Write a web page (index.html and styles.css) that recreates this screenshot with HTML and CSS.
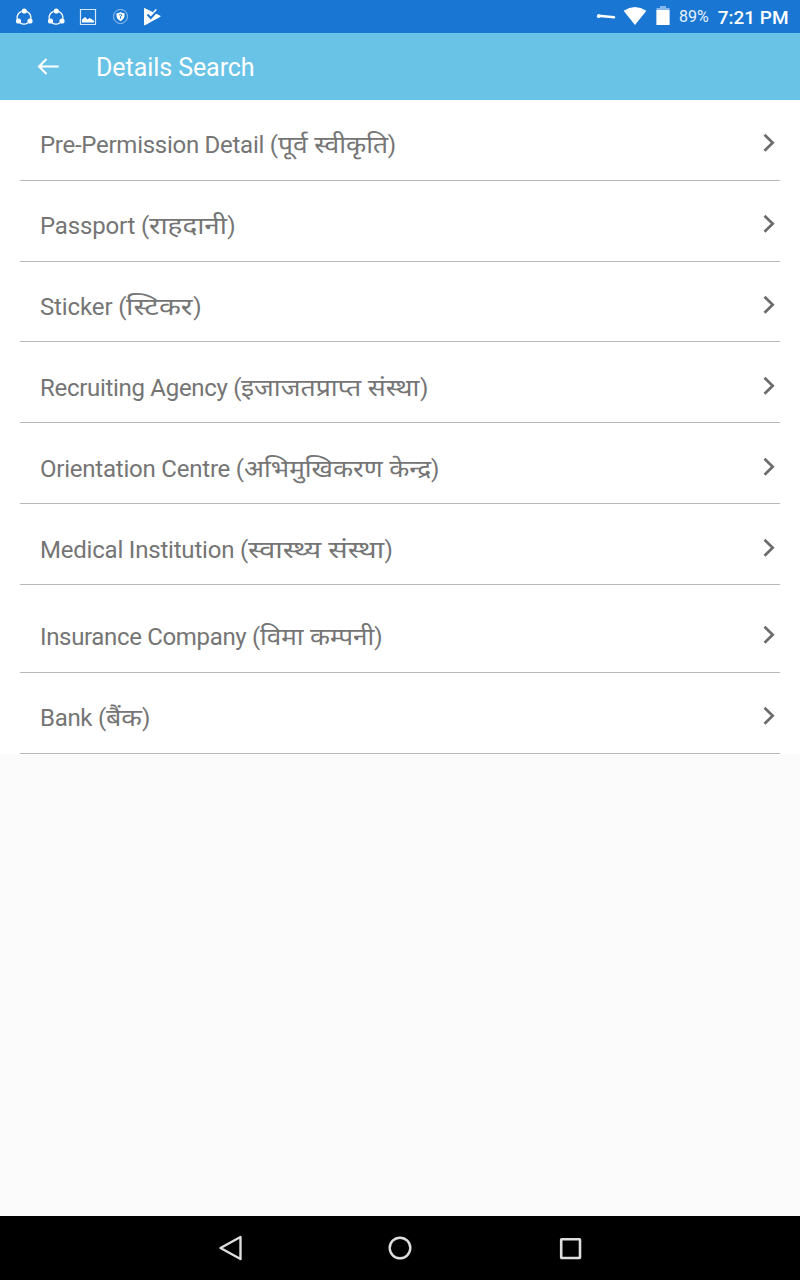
FILE: index.html
```
<!DOCTYPE html>
<html lang="en">
<head>
<meta charset="utf-8">
<title>Details Search</title>
<link rel="stylesheet" href="styles.css">
</head>
<body>
<svg class="symbols" aria-hidden="true">
  <symbol id="chevron" viewBox="0 0 14 20"><path d="M2.500 1.700l8.200 8-8.200 8" fill="none" stroke="#6c6c6c" stroke-width="2.700"/></symbol>
  <symbol id="share" viewBox="0 0 18 18"><path d="M6.600 3.300a6.700 6.700 0 0 0-4.300 7.800M11.400 3.300a6.700 6.700 0 0 1 4.300 7.800M5 14.700a6.700 6.700 0 0 0 8 0" fill="none" stroke="#fff" stroke-width="1.300"/><g fill="#fff"><circle cx="9.300" cy="3" r="2.600"/><circle cx="3.500" cy="13" r="2.600"/><circle cx="15" cy="13" r="2.600"/></g></symbol>
</svg>
<div class="screen">
  <div class="status">
    <div class="notifications">
      <svg width="18" height="18"><use href="#share"/></svg>
      <svg width="18" height="18"><use href="#share"/></svg>
      <svg width="18" height="18" viewBox="0 0 18 18"><path d="M1.500 1.500h15v15h-15z" fill="none" stroke="#d6e7f8" stroke-width="1.200"/><path d="M3 14.500v-3l3-2.500 2.500 2.500 2-1.500 2 1 2.500 2v1.500z" fill="#fff"/></svg>
      <svg width="18" height="18" viewBox="0 0 18 18"><circle cx="9.500" cy="8.500" r="7" fill="none" stroke="#9bc6f0" stroke-width="1"/><path d="M5.500 5.200q2.500 0 4-1.200 1.500 1.200 4 1.200v3.600q-.6 2.700-4 4.400-3.400-1.700-4-4.400z" fill="#fff"/><path d="M8.200 7q1.300-1.300 2.600 0 .2 1-1.300 1.600v2" fill="none" stroke="#1976d2" stroke-width="1"/></svg>
      <svg width="18" height="18" viewBox="0 0 18 18"><path d="M1.500.500 17.300 8.300 1.500 17z" fill="#fff" stroke="#fff" stroke-linejoin="round"/><path d="M4.500 6.500 7.800 10 16.500.500" fill="none" stroke="#1976d2" stroke-width="1.900"/><path d="M10.500 4.500 13.300 1.500" stroke="#fff" stroke-width="1.600"/></svg>
    </div>
    <div class="system">
      <svg class="key" width="20" height="8" viewBox="0 0 20 8"><path d="M2.500 2.800 18 4.200" fill="none" stroke="#fff" stroke-width="2.600" stroke-linecap="round"/><circle cx="2.800" cy="3.200" r="1.900" fill="#fff"/></svg>
      <svg class="wifi" width="24" height="18" viewBox="0 0 24 18"><path d="M.6 3.800Q12-3.600 23.400 3.800L12 18z" fill="#fff"/></svg>
      <svg class="battery" width="14" height="19" viewBox="0 0 14 19"><path d="M4 0h6v2h3.500v17H.5V2H4z" fill="#84b7ec"/><path d="M.5 4h13v15H.5z" fill="#fff"/></svg>
      <span class="percent">89%</span>
      <span class="time">7:21 PM</span>
    </div>
  </div>
  <header class="appbar">
    <svg width="24" height="20" viewBox="0 0 24 20"><path d="M10.500 2 3 9.500l7.500 7.500M3 9.500h19.700" fill="none" stroke="#fff" stroke-width="2.100"/></svg>
    <h1 class="title">Details Search</h1>
  </header>
  <main class="list">
    <div class="row permission"><span class="label">Pre-Permission Detail (<span class="np">पूर्व स्वीकृति</span>)</span><svg class="chevron"><use href="#chevron"/></svg></div>
    <div class="row passport"><span class="label">Passport (<span class="np">राहदानी</span>)</span><svg class="chevron"><use href="#chevron"/></svg></div>
    <div class="row short sticker"><span class="label">Sticker (<span class="np">स्टिकर</span>)</span><svg class="chevron"><use href="#chevron"/></svg></div>
    <div class="row recruiting"><span class="label">Recruiting Agency (<span class="np">इजाजतप्राप्त संस्था</span>)</span><svg class="chevron"><use href="#chevron"/></svg></div>
    <div class="row orientation"><span class="label">Orientation Centre (<span class="np">अभिमुखिकरण केन्द्र</span>)</span><svg class="chevron"><use href="#chevron"/></svg></div>
    <div class="row medical"><span class="label">Medical Institution (<span class="np">स्वास्थ्य संस्था</span>)</span><svg class="chevron"><use href="#chevron"/></svg></div>
    <div class="row tall insurance"><span class="label">Insurance Company (<span class="np">विमा कम्पनी</span>)</span><svg class="chevron"><use href="#chevron"/></svg></div>
    <div class="row bank"><span class="label">Bank (<span class="np">बैंक</span>)</span><svg class="chevron"><use href="#chevron"/></svg></div>
  </main>
  <nav class="navbar">
    <svg width="28" height="28" viewBox="0 0 28 28"><path d="M24.500 3v22L4.500 14z" fill="none" stroke="#dedede" stroke-width="2.400" stroke-linejoin="round"/></svg>
    <svg width="28" height="28" viewBox="0 0 28 28"><circle cx="14" cy="14" r="10.300" fill="none" stroke="#dedede" stroke-width="2.400"/></svg>
    <svg width="28" height="28" viewBox="0 0 28 28"><rect x="5.200" y="5.200" width="18.800" height="18.800" rx=".5" fill="none" stroke="#dedede" stroke-width="2.600"/></svg>
  </nav>
</div>
</body>
</html>
```
FILE: styles.css
```
* { box-sizing: border-box; }
body { margin: 0; font-family: Roboto, "Noto Sans Devanagari", "Noto Sans", sans-serif; }
svg { display: block; flex: none; }
.symbols { display: none; }
.screen { width: 800px; height: 1280px; display: flex; flex-direction: column; background: #fbfbfb; overflow: hidden; }
.status { height: 33px; flex: none; background: #1976d2; color: #fff; display: flex; justify-content: space-between; padding: 0 11.500px 0 15px; }
.notifications { display: flex; gap: 14px; padding-top: 8px; }
.system { display: flex; height: 33px; }
.key { margin: 13px 7px 0 0; }
.wifi { margin: 7px 9px 0 0; }
.battery { margin: 6px 9px 0 0; }
.percent { font-size: 16px; line-height: 34px; margin-right: 9px; color: #e8f1fb; }
.time { font-size: 19px; font-weight: 500; line-height: 35px; }
.appbar { height: 67px; flex: none; background: #69c3e6; display: flex; align-items: center; gap: 36px; padding-left: 36px; }
.title { margin: 2px 0 0; font-size: 25px; line-height: 32px; font-weight: 400; letter-spacing: -0.07px; color: #fff; white-space: nowrap; }
.list { flex: none; background: #fff; padding: 0 20px; }
.row { height: 81px; display: flex; align-items: flex-end; justify-content: space-between; padding: 0 4px 19px 20px; border-bottom: 1px solid #b8b8b8; }
.short { height: 80px; padding-bottom: 18px; }
.recruiting, .orientation, .medical { padding-bottom: 18px; }
.tall { height: 88px; }
.label { font-size: 24px; line-height: 32px; height: 32px; color: #757575; white-space: nowrap; letter-spacing: var(--tracking); }
/* Devanagari is set wider than the Latin text */
.np { display: inline-block; letter-spacing: 0; transform: scaleX(var(--stretch)); transform-origin: left; margin-right: var(--extra); }
.permission { --tracking: -0.27px; --stretch: 1.1; --extra: 10px; }
.passport { --tracking: -0.17px; --stretch: 1.16; --extra: 11px; }
.sticker { --tracking: -0.13px; --stretch: 1.19; --extra: 11px; }
.recruiting { --tracking: -0.3px; --stretch: 1.11; --extra: 18px; }
.orientation { --tracking: -0.22px; --stretch: 1.09; --extra: 15.500px; }
.medical { --tracking: -0.2px; --stretch: 1.2; --extra: 23px; }
.insurance { --tracking: -0.34px; --stretch: 1.085; --extra: 9px; }
.bank { --tracking: -0.3px; --stretch: 1.12; --extra: 4px; }
.chevron { width: 14px; height: 20px; margin-bottom: 8px; }
.navbar { height: 64px; margin-top: auto; flex: none; background: #000; display: flex; justify-content: center; align-items: center; gap: 142px; }
```
